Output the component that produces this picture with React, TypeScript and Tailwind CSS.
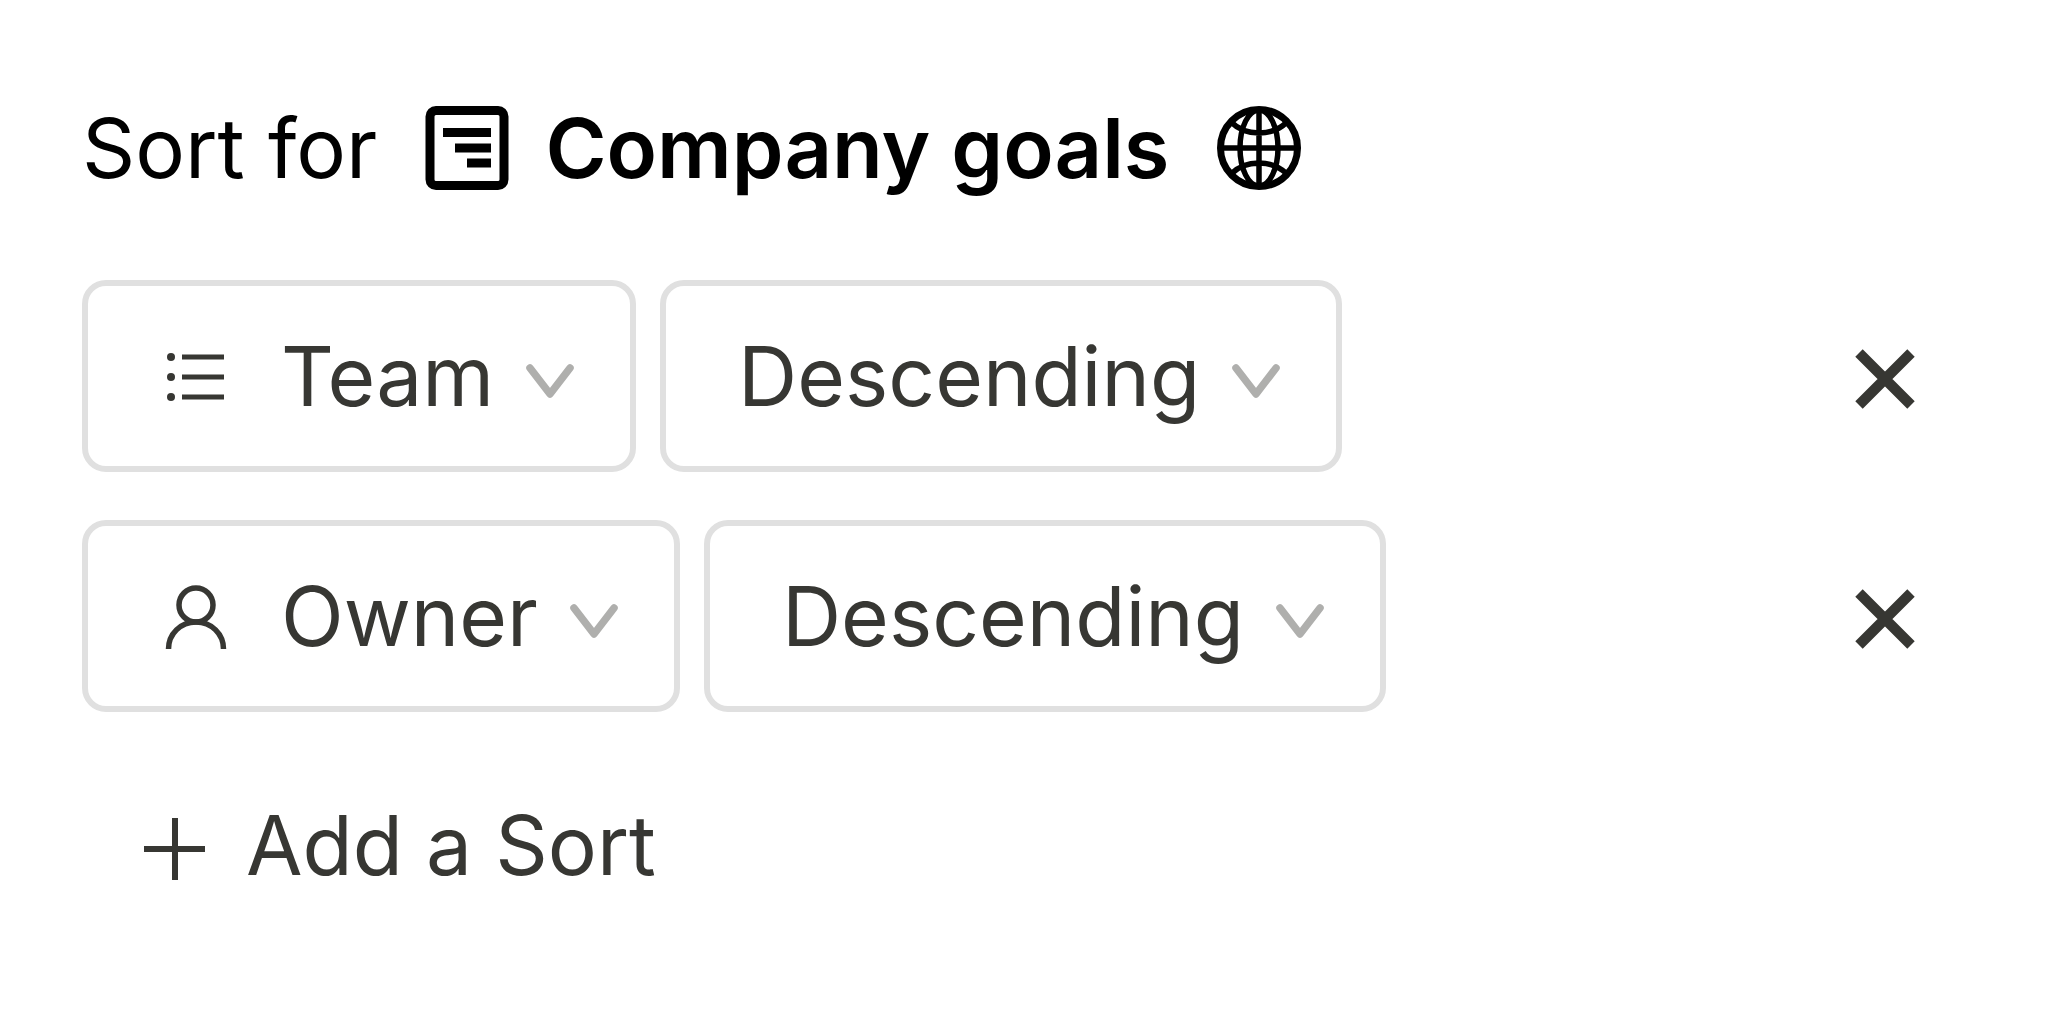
import { useState, type ReactNode } from "react";

type Order = "Descending" | "Ascending";

type SortRule = {
  id: number;
  property: string;
  order: Order;
};

const PROPERTIES = ["Team", "Owner"];
const ORDERS: Order[] = ["Descending", "Ascending"];

export default function App() {
  const [rules, setRules] = useState<SortRule[]>([
    { id: 1, property: "Team", order: "Descending" },
    { id: 2, property: "Owner", order: "Descending" },
  ]);

  const update = (id: number, patch: Partial<SortRule>) =>
    setRules((rs) => rs.map((r) => (r.id === id ? { ...r, ...patch } : r)));

  const remove = (id: number) => setRules((rs) => rs.filter((r) => r.id !== id));

  const add = () =>
    setRules((rs) => [...rs, { id: Date.now(), property: "Team", order: "Descending" }]);

  return (
    <main className="min-h-screen bg-white pt-24 pr-[155px] pb-24 pl-[82px] font-['Inter',sans-serif] text-[82px] leading-[104px] text-[#373733]">
      <h1 className="flex items-center pb-20 text-[83px] font-normal text-black">
        <span className="pr-12">Sort for</span>
        <BoardIcon />
        <span className="pr-12 pl-9 font-semibold">Company goals</span>
        <GlobeIcon />
      </h1>

      <ul className="flex flex-col gap-12">
        {rules.map((rule) => (
          <li key={rule.id} className="flex items-center gap-6">
            <Dropdown
              label="Property"
              icon={rule.property === "Owner" ? <PersonIcon /> : <ListIcon />}
              value={rule.property}
              options={PROPERTIES}
              onChange={(v) => update(rule.id, { property: v })}
            />
            <Dropdown
              label="Order"
              value={rule.order}
              options={ORDERS}
              onChange={(v) => update(rule.id, { order: v as Order })}
            />
            <button
              type="button"
              aria-label="Remove sort"
              onClick={() => remove(rule.id)}
              className="ml-auto"
            >
              <CloseIcon />
            </button>
          </li>
        ))}
      </ul>

      <button type="button" onClick={add} className="mt-[82px] ml-[62px] flex items-center gap-[38px]">
        <PlusIcon />
        Add a Sort
      </button>
    </main>
  );
}

function Dropdown({
  label,
  icon,
  value,
  options,
  onChange,
}: {
  label: string;
  icon?: ReactNode;
  value: string;
  options: string[];
  onChange: (v: string) => void;
}) {
  return (
    <label className="flex h-48 items-center rounded-3xl border-6 border-[#e0e0e0] pt-0.5 pr-14 pl-18">
      {icon && <span className="mr-[52px] ml-[5px]">{icon}</span>}
      <select
        aria-label={label}
        value={value}
        onChange={(e) => onChange(e.target.value)}
        className="[field-sizing:content] appearance-none bg-transparent outline-none"
      >
        {options.map((o) => (
          <option key={o} value={o}>
            {o}
          </option>
        ))}
      </select>
      <ChevronIcon />
    </label>
  );
}

function BoardIcon() {
  return (
    <svg className="size-21 shrink-0" viewBox="0 0 84 84" fill="currentColor" aria-hidden="true">
      <rect x="5" y="4.5" width="74" height="75" rx="6" fill="none" stroke="currentColor" strokeWidth="9" />
      <path d="M18 22h48v9H18zM30 37.500h36v9H30zM42 52.500h24v9H42z" />
    </svg>
  );
}

function GlobeIcon() {
  return (
    <svg
      className="size-21 shrink-0"
      viewBox="0 0 84 84"
      fill="none"
      stroke="currentColor"
      strokeWidth="5.500"
      aria-hidden="true"
    >
      <circle cx="42" cy="42" r="38.500" strokeWidth="7" />
      <ellipse cx="42" cy="42" rx="19" ry="38" />
      <path d="M42 3v78M3 42h78M14 16c7 7 17 11 28 11s21-4 28-11M14 68c7-7 17-11 28-11s21 4 28 11" />
    </svg>
  );
}

function ListIcon() {
  return (
    <svg className="size-16" viewBox="0 0 64 64" fill="currentColor" aria-hidden="true">
      <circle cx="6" cy="12" r="4" />
      <circle cx="6" cy="32" r="4" />
      <circle cx="6" cy="52" r="4" />
      <path d="M17 9.500h42v5H17zM17 29.500h42v5H17zM17 49.500h42v5H17z" />
    </svg>
  );
}

function PersonIcon() {
  return (
    <svg
      className="size-16"
      viewBox="0 0 64 64"
      fill="none"
      stroke="currentColor"
      strokeWidth="5.500"
      aria-hidden="true"
    >
      <circle cx="31" cy="20" r="17" />
      <path d="M3.500 64c0-15 12-27 27.500-27s27.500 12 27.500 27" />
    </svg>
  );
}

function ChevronIcon() {
  return (
    <svg
      className="ml-8 h-11 w-12 shrink-0"
      viewBox="0 0 48 44"
      fill="none"
      stroke="#afafad"
      strokeWidth="7.500"
      strokeLinecap="round"
      strokeLinejoin="round"
      aria-hidden="true"
    >
      <path d="M4 13l20 26 20-26" />
    </svg>
  );
}

function CloseIcon() {
  return (
    <svg className="h-[70px] w-16" viewBox="0 -6 64 70" fill="none" stroke="currentColor" strokeWidth="10.500" aria-hidden="true">
      <path d="M6 6l52 52M58 6L6 58" />
    </svg>
  );
}

function PlusIcon() {
  return (
    <svg className="h-[70px] w-16" viewBox="0 -6 64 70" fill="none" stroke="currentColor" strokeWidth="6" aria-hidden="true">
      <path d="M31 1v62M0 32h61" />
    </svg>
  );
}
